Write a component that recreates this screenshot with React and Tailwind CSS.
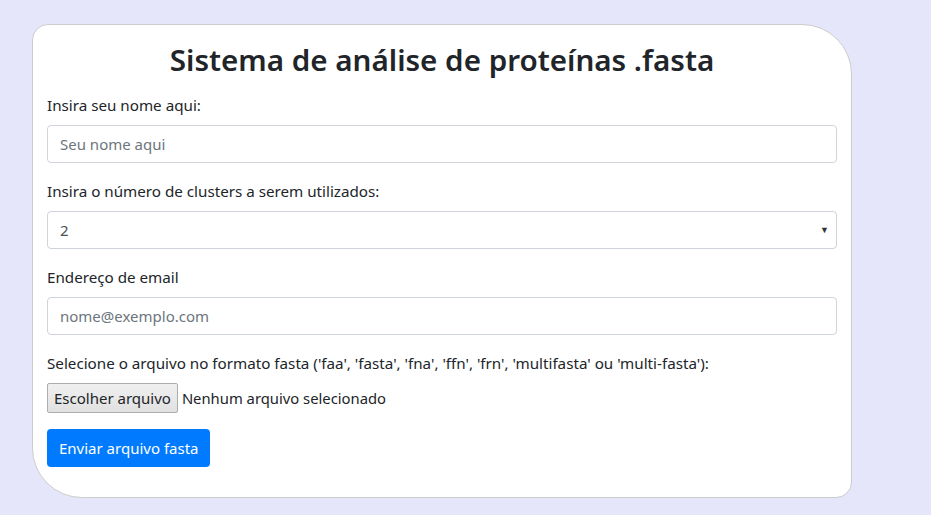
export default function App() {
  const font = { fontFamily: '"Noto Sans", "Open Sans", sans-serif' };

  return (
    <div className="min-h-[515px] bg-[#e6e6fa] pt-[24px] pl-[32px] pb-[18px]" style={font}>
      <div className="w-[820px] bg-white border border-[#cccccc] rounded-tl-[16px] rounded-tr-[50px] rounded-br-[16px] rounded-bl-[50px] px-[14px] pt-[15px] pb-[30px] text-[#212529]">
        <h1 className="text-center text-[29.6px] font-semibold leading-[40px] mb-[13px]">
          Sistema de análise de proteínas .fasta
        </h1>

        <form>
          <div className="mb-4">
            <label className="block text-[15.2px] leading-6 mb-2">Insira seu nome aqui:</label>
            <input
              type="text"
              placeholder="Seu nome aqui"
              className="block w-full h-[38px] px-3 text-[15px] border border-[#ced4da] rounded placeholder:text-[#6c757d] outline-none"
            />
          </div>

          <div className="mb-4">
            <label className="block text-[15.2px] leading-6 mb-2">Insira o número de clusters a serem utilizados:</label>
            <div className="relative">
              <select className="block w-full h-[38px] px-3 text-[15px] border border-[#ced4da] rounded bg-white appearance-none outline-none text-[#495057]">
                <option>2</option>
                <option>3</option>
                <option>4</option>
              </select>
              <span className="absolute right-[8px] top-[12px] text-[9px] text-[#333] pointer-events-none">▼</span>
            </div>
          </div>

          <div className="mb-4">
            <label className="block text-[15.2px] leading-6 mb-2">Endereço de email</label>
            <input
              type="email"
              placeholder="nome@exemplo.com"
              className="block w-full h-[38px] px-3 text-[15px] border border-[#ced4da] rounded placeholder:text-[#6c757d] outline-none"
            />
          </div>

          <div className="mb-4">
            <label className="block text-[15.2px] leading-6 mb-2">
              Selecione o arquivo no formato fasta ('faa', 'fasta', 'fna', 'ffn', 'frn', 'multifasta' ou 'multi-fasta'):
            </label>
            <div className="flex items-center h-[30px]">
              <button
                type="button"
                className="h-[30px] px-[6px] text-[15px] border border-[#adadad] rounded-[2px] bg-gradient-to-b from-[#f0f0f0] to-[#e1e1e1]"
              >
                Escolher arquivo
              </button>
              <span className="ml-[4px] text-[14.8px]">Nenhum arquivo selecionado</span>
            </div>
          </div>

          <button
            type="button"
            className="h-[38px] px-3 text-[15px] text-white bg-[#007bff] rounded"
          >
            Enviar arquivo fasta
          </button>
        </form>
      </div>
    </div>
  );
}
